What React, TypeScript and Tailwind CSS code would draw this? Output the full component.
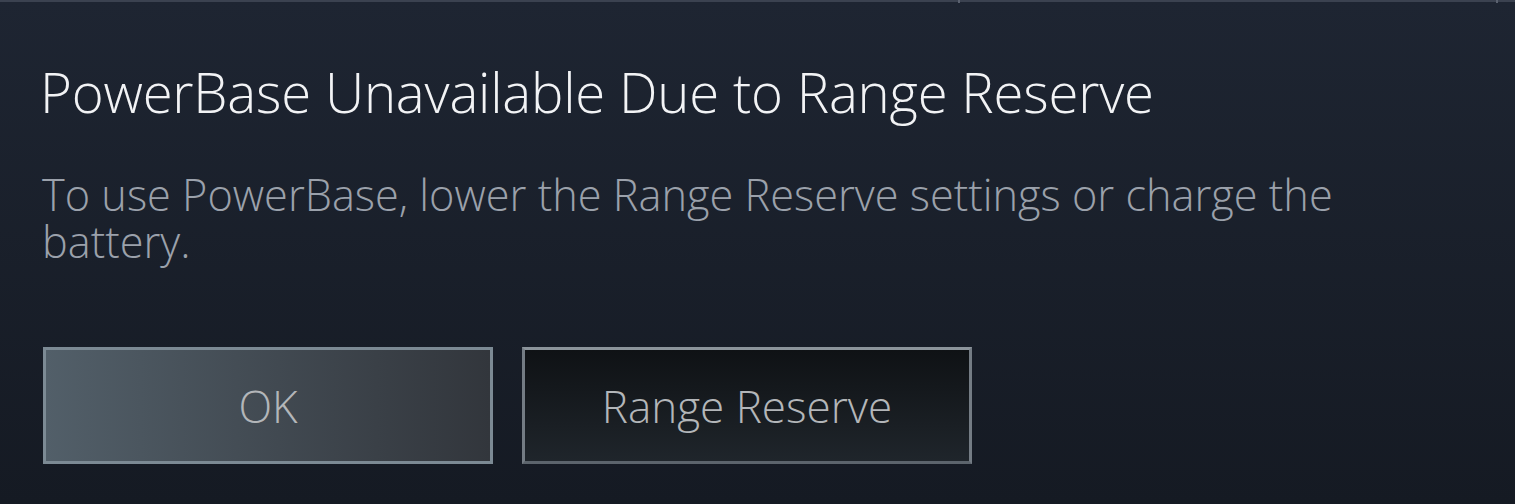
export default function App() {
  return (
    <div
      className="relative h-[504px] w-[1515px] overflow-hidden bg-gradient-to-b from-[#1e2532] to-[#151a23] font-['Open_Sans',sans-serif]"
    >
      {/* top edge */}
      <div className="absolute left-0 top-0 h-[2px] w-full bg-[#3b4250]" />
      <div className="absolute left-[958px] top-0 h-[3px] w-[2px] bg-[#5b6270]" />
      <div className="absolute left-[1496px] top-0 h-[3px] w-[2px] bg-[#5b6270]" />

      <div className="flex flex-col pl-[40px] pt-[60px]">
        <h1 className="text-[54.5px] font-light leading-[64px] tracking-[-0.2px] text-[#f2f3f5]">
          PowerBase Unavailable Due to Range Reserve
        </h1>
        <p className="mt-[47px] max-w-[1320px] pl-[2px] text-[43.3px] font-light leading-[47px] text-[#9ba1ab]">
          To use PowerBase, lower the Range Reserve settings or charge the battery.
        </p>
        <div className="mt-[82px] flex gap-[29px] pl-[3px]">
          <button className="flex h-[117px] w-[450px] items-center justify-center border-[3px] border-[#7c8a94] bg-gradient-to-r from-[#525f69] to-[#32363c] text-[44px] font-light text-[#b3b6b9]">
            OK
          </button>
          <button className="flex h-[117px] w-[450px] items-center justify-center border-[3px] border-t-[#8c949b] border-x-[#747c84] border-b-[#5c646c] bg-gradient-to-b from-[#0f1215] to-[#1f252b] text-[44px] font-light text-[#b3b6b9]">
            Range Reserve
          </button>
        </div>
      </div>
    </div>
  );
}
